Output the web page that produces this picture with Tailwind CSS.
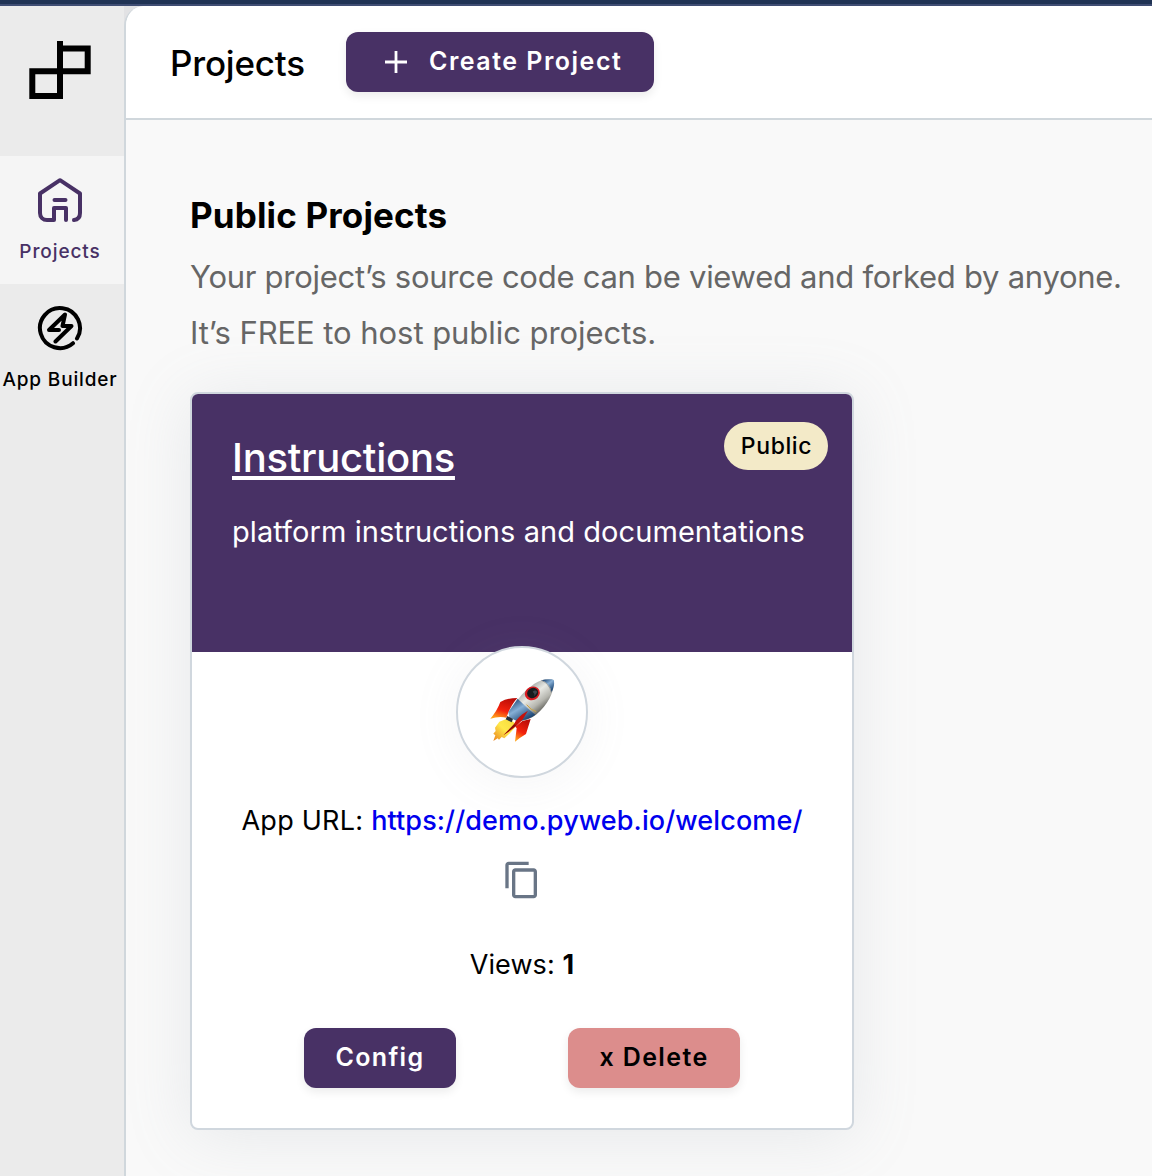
<!DOCTYPE html>
<html lang="en">
<head>
<meta charset="utf-8">
<title>Projects</title>
<script src="https://cdn.jsdelivr.net/npm/@tailwindcss/browser@4"></script>
</head>
<body class="flex h-[1176px] w-[1152px] flex-col overflow-hidden bg-[#e2e2e4] font-['Inter',sans-serif] text-black">
<div class="h-1.5 shrink-0 border-b-2 border-[#3f4d73] bg-[#203354]"></div>
<div class="flex min-h-0 flex-1">
  <aside class="flex w-[124px] shrink-0 flex-col bg-[#ebebeb]">
    <div class="flex h-[150px] justify-center pt-[35px] pr-1">
      <svg class="h-[58px] w-[62px]" viewBox="29 41 62 58" fill="none" stroke="#000" stroke-width="6">
        <path d="M60 41V96H32.3V71.3H87.7V48.4H60"/>
      </svg>
    </div>
    <a class="flex h-32 flex-col items-center bg-[#f5f5f5] pt-5 pr-1 text-[#483165]">
      <svg class="size-12" viewBox="0 0 48 48" fill="none" stroke="currentColor" stroke-width="4" stroke-linecap="round" stroke-linejoin="round">
        <path d="M38 44c3.800-.3 6-2.500 6-7V17.500L24 4.200 4 17.500V37c0 4 3 7 7 7h7V32h12v12M18.500 24h11"/>
      </svg>
      <span class="mt-4 text-[19px] leading-6 font-medium tracking-[0.9px] whitespace-nowrap">Projects</span>
    </a>
    <a class="flex h-32 flex-col items-center pt-5 pr-1">
      <svg class="size-12" viewBox="0 0 48 48" fill="none" stroke="currentColor" stroke-width="4" stroke-linecap="round" stroke-linejoin="round">
        <path d="M37 39.200A20 20 0 1 1 41 34.500M23 26H13L29 10.500 26.500 22H35.500L19.500 37.500"/>
      </svg>
      <span class="mt-4 text-[19px] leading-6 font-medium tracking-[0.85px] whitespace-nowrap">App Builder</span>
    </a>
  </aside>
  <main class="flex min-w-0 flex-1 flex-col overflow-hidden rounded-tl-[20px] border-l-2 border-[#d0d7dc] bg-[#f9f9f9]">
    <header class="flex h-[114px] shrink-0 items-center border-b-2 border-[#d0d7dc] bg-white pl-11">
      <h1 class="w-44 pt-0.5 text-[35px] leading-10 font-medium tracking-[-0.2px] whitespace-nowrap">Projects</h1>
      <button class="flex h-[60px] w-[308px] items-center rounded-xl bg-[#483165] pl-[39px] text-white shadow-[0_4px_10px_rgba(0,0,0,0.08)]">
        <svg class="size-[22px]" viewBox="0 0 22 22" stroke="currentColor" stroke-width="2.800"><path d="M0 11h22M11 0v22"/></svg>
        <span class="ml-[22px] pb-0.5 text-[25px] leading-8 font-semibold tracking-[1.5px] whitespace-nowrap">Create Project</span>
      </button>
    </header>
    <section class="pt-[75px] pl-16">
      <h2 class="text-[35px] leading-10 font-bold tracking-[0.15px]">Public Projects</h2>
      <p class="mt-3.5 text-[31px] leading-[56px] whitespace-nowrap text-[#666]"><span class="tracking-[-0.27px]">Your project’s source code can be viewed and forked by anyone.</span><br><span class="tracking-[-0.06px]">It’s FREE to host public projects.</span></p>
      <article class="mt-[31px] flex h-[738px] w-[664px] flex-col rounded-lg border-2 border-[#d0d7de] bg-white shadow-[0_6px_64px_rgba(140,155,165,0.17)]">
        <div class="flex h-[258px] shrink-0 justify-between rounded-t-md bg-[#483165] pr-6 pl-10 text-white">
          <div class="pt-10">
            <h3 class="text-[40px] leading-[48px] font-medium tracking-[-0.27px] underline decoration-4 underline-offset-4">Instructions</h3>
            <p class="mt-[30px] w-0 text-[29px] leading-10 tracking-[0.07px] whitespace-nowrap">platform instructions and documentations</p>
          </div>
          <span class="mt-7 flex h-12 w-[104px] items-center justify-center rounded-full bg-[#f3eac8] pl-px text-[23px] font-medium tracking-[0.6px] text-black">Public</span>
        </div>
        <div class="-mt-1.5 flex flex-col items-center">
          <div class="flex size-[132px] items-center justify-center rounded-full border-2 border-[#d0d7de] bg-white shadow-[0_6px_48px_rgba(140,149,159,0.09)]">
            <svg class="size-[75px]" viewBox="0 0 225 225">
              <defs>
                <linearGradient id="body" x1="0.250" y1="0.200" x2="0.750" y2="0.800"><stop offset="0" stop-color="#8f9493"/><stop offset=".4" stop-color="#e8e9e4"/><stop offset=".7" stop-color="#b5b5ae"/><stop offset="1" stop-color="#4c4c47"/></linearGradient>
                <linearGradient id="blue" x1="0.200" y1="0.100" x2="0.800" y2="0.900"><stop offset="0" stop-color="#2e5582"/><stop offset=".4" stop-color="#86afd6"/><stop offset="1" stop-color="#173f6d"/></linearGradient>
                <linearGradient id="fin" x1="0.700" y1="0" x2="0.300" y2="1"><stop offset="0" stop-color="#b80d08"/><stop offset=".6" stop-color="#f4220d"/><stop offset="1" stop-color="#ffa11a"/></linearGradient>
                <linearGradient id="flame" x1="1" y1="0" x2="0" y2="1"><stop offset="0" stop-color="#f5d83c"/><stop offset=".5" stop-color="#ffe94a"/><stop offset="1" stop-color="#e97f1c"/></linearGradient>
              </defs>
              <path fill="url(#flame)" d="M66 131 43 140 30 158 32 168 25 176 31 181 25 198 38 190 42 194 50 186 58 190 73 176 88 160 92 146 78 136Z"/>
              <path fill="url(#fin)" d="M97 69Q67 69 46 81Q36 108 16 131Q42 123 64 128Q77 91 97 69Z"/>
              <path fill="url(#fin)" d="M137 132 112 138 91 155 95 160 90 200Q106 187 123 177L137 132Z"/>
              <path fill="url(#body)" d="M207 18C207 13 200 13 192 13Q170 13 148 26Q108 52 75 108L74 128 98 138Q132 136 153 119C188 90 208 52 207 18Z"/>
              <path fill="url(#blue)" d="M98 71 70 111 73 127 94 137Q128 137 151 119L126 98Z"/>
              <path fill="url(#blue)" d="M207 18C207 13 200 13 192 13Q178 13 169 16Q193 22 200 52Q209 33 207 18Z"/>
              <path fill="none" stroke="#cfa63f" stroke-width="3" d="M125 89Q138 106 154 110"/>
              <path fill="none" stroke="#7b8184" stroke-width="2" d="M169 16Q193 25 199 53"/>
              <ellipse cx="142" cy="55" rx="23" ry="20" transform="rotate(-25 142 55)" fill="#d91b21"/>
              <ellipse cx="143" cy="54" rx="17" ry="15" transform="rotate(-25 143 54)" fill="#181c1f"/>
              <path fill="#3c464d" d="M143 50Q151 43 157 51L148 64Q150 55 143 50Z"/>
              <path fill="#27303a" d="m67 123 17 9-4 10-18-9Z"/>
              <path fill="#c4120c" d="M129 107Q96 125 86 149L56 180Q91 160 112 135Z"/>
              <path fill="#861009" d="M87 148 56 180 94 151Z"/>
            </svg>
          </div>
          <p class="mt-[23px] text-[27px] leading-10 whitespace-nowrap"><span class="tracking-[0.25px]">App URL: </span><a class="font-medium tracking-[0.11px] text-[#0000ee]">https://demo.pyweb.io/welcome/</a></p>
          <svg class="mt-[19px] size-10" viewBox="0 0 24 24" fill="#697586"><path d="M16 1H4c-1.100 0-2 .9-2 2v14h2V3h12V1zm3 4H8c-1.100 0-2 .9-2 2v14c0 1.100.9 2 2 2h11c1.100 0 2-.9 2-2V7c0-1.100-.9-2-2-2zm0 16H8V7h11v14z"/></svg>
          <p class="mt-[45px] text-[27px] leading-10 tracking-[0.1px] whitespace-nowrap">Views: <b>1</b></p>
          <div class="mt-[43px] flex w-[436px] justify-between">
            <button class="h-[60px] w-[152px] rounded-xl bg-[#483165] text-[25px] font-semibold tracking-[1.300px] text-white shadow-[0_4px_10px_rgba(0,0,0,0.08)]">Config</button>
            <button class="h-[60px] w-[172px] rounded-xl bg-[#dc8d8c] text-[25px] font-semibold tracking-[1.400px] whitespace-nowrap shadow-[0_4px_10px_rgba(0,0,0,0.08)]">x Delete</button>
          </div>
        </div>
      </article>
    </section>
  </main>
</div>
</body>
</html>
